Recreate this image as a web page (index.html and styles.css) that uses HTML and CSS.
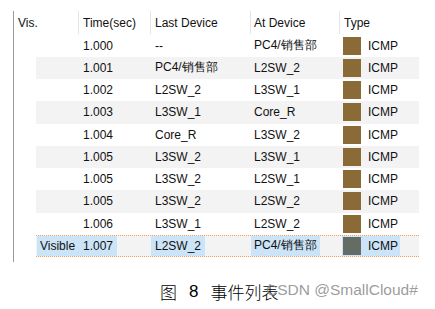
FILE: index.html
```html
<!DOCTYPE html>
<html>
<head>
<meta charset="utf-8">
<link rel="stylesheet" href="styles.css">
</head>
<body>
<div class="panel">
  <div class="head">
    <div class="hc first">Vis.</div>
    <div class="hc">Time(sec)</div>
    <div class="hc">Last Device</div>
    <div class="hc c4">At Device</div>
    <div class="hc">Type</div>
  </div>
  <div class="rows">
    <div class="row"><div class="vis"></div><div class="time"><span>1.000</span></div><div class="last"><span>--</span></div><div class="at"><span>PC4/销售部</span></div><div class="type"><span><i class="sq"></i>ICMP</span></div></div>
    <div class="row alt"><div class="vis"></div><div class="time"><span>1.001</span></div><div class="last"><span>PC4/销售部</span></div><div class="at"><span>L2SW_2</span></div><div class="type"><span><i class="sq"></i>ICMP</span></div></div>
    <div class="row"><div class="vis"></div><div class="time"><span>1.002</span></div><div class="last"><span>L2SW_2</span></div><div class="at"><span>L3SW_1</span></div><div class="type"><span><i class="sq"></i>ICMP</span></div></div>
    <div class="row alt"><div class="vis"></div><div class="time"><span>1.003</span></div><div class="last"><span>L3SW_1</span></div><div class="at"><span>Core_R</span></div><div class="type"><span><i class="sq"></i>ICMP</span></div></div>
    <div class="row"><div class="vis"></div><div class="time"><span>1.004</span></div><div class="last"><span>Core_R</span></div><div class="at"><span>L3SW_2</span></div><div class="type"><span><i class="sq"></i>ICMP</span></div></div>
    <div class="row alt"><div class="vis"></div><div class="time"><span>1.005</span></div><div class="last"><span>L3SW_2</span></div><div class="at"><span>L3SW_1</span></div><div class="type"><span><i class="sq"></i>ICMP</span></div></div>
    <div class="row"><div class="vis"></div><div class="time"><span>1.005</span></div><div class="last"><span>L3SW_2</span></div><div class="at"><span>L2SW_1</span></div><div class="type"><span><i class="sq"></i>ICMP</span></div></div>
    <div class="row alt"><div class="vis"></div><div class="time"><span>1.005</span></div><div class="last"><span>L3SW_2</span></div><div class="at"><span>L2SW_2</span></div><div class="type"><span><i class="sq"></i>ICMP</span></div></div>
    <div class="row"><div class="vis"></div><div class="time"><span>1.006</span></div><div class="last"><span>L3SW_1</span></div><div class="at"><span>L2SW_2</span></div><div class="type"><span><i class="sq"></i>ICMP</span></div></div>
    <div class="row alt sel"><div class="vis"><span>Visible</span></div><div class="time"><span>1.007</span></div><div class="last"><span>L2SW_2</span></div><div class="at"><span>PC4/销售部</span></div><div class="type"><span><i class="sq gray"></i>ICMP</span></div></div>
  </div>
</div>
<div class="caption"><span>图</span><span class="num">8</span><span>事件列表</span></div>
<div class="watermark">CSDN @SmallCloud#</div>
</body>
</html>
```
FILE: styles.css
```css
html, body {
  margin: 0;
  padding: 0;
  background: #fff;
}
body {
  width: 435px;
  height: 309px;
  position: relative;
  overflow: hidden;
  font-family: "Liberation Sans", Arial, sans-serif;
  font-size: 12px;
  color: #111;
}
.panel {
  margin-left: 13px;
  margin-top: 11px;
  height: 251px;
  width: 410px;
  border-left: 1px solid #9a9a9a;
}
.head {
  display: grid;
  grid-template-columns: 64px 72px 100px 89px 1fr;
  height: 23.5px;
}
.hc {
  display: flex;
  align-items: center;
  border-left: 1px solid #e6e6e6;
  padding-left: 4px;
  height: 23px;
}
.hc.first {
  border-left: none;
}
.hc.c4 {
  padding-left: 3px;
}
.rows {
  margin-left: 22px;
  width: 383px;
}
.row {
  display: grid;
  grid-template-columns: 44px 70px 100px 90px 79px;
  height: 22.25px;
  align-items: center;
  box-sizing: border-box;
}
.row.alt {
  background: #f3f3f3;
}
.row > div {
  display: flex;
  align-items: center;
  height: 100%;
}
.row span {
  display: flex;
  align-items: center;
  height: 20px;
}
.time span {
  padding-left: 3px;
  padding-right: 4px;
}
.last span {
  margin-left: 1px;
  padding-left: 4px;
  padding-right: 4px;
}
.at span {
  margin-left: 1px;
  padding-left: 3px;
  padding-right: 3px;
}
.type span {
  margin-left: 2px;
  padding-left: 1px;
  padding-right: 2px;
}
.vis span {
  margin-left: 1px;
  padding-left: 3px;
  width: 40px;
}
.sq {
  display: inline-block;
  width: 18px;
  height: 18px;
  background: #8a6a37;
  margin-right: 7px;
}
.sq.gray {
  background: #656c63;
}
.row.sel {
  border-top: 1px dotted #f0a060;
  border-bottom: 1px dotted #f0a060;
}
.row.sel span {
  background: #cce4f7;
}
.caption {
  margin-top: 20px;
  padding-left: 160px;
  height: 20px;
  line-height: 20px;
  font-family: "Noto Sans CJK SC", sans-serif;
  font-weight: 300;
  font-size: 17px;
  color: #000;
  display: flex;
}
.caption .num {
  font-family: "Liberation Sans", sans-serif;
  font-weight: 400;
  margin: 0 12px;
}
.watermark {
  position: absolute;
  left: 266px;
  top: 281px;
  font-family: "Liberation Sans", Arial, sans-serif;
  font-size: 15.5px;
  color: rgba(130, 130, 130, 0.8);
  white-space: nowrap;
}
```
